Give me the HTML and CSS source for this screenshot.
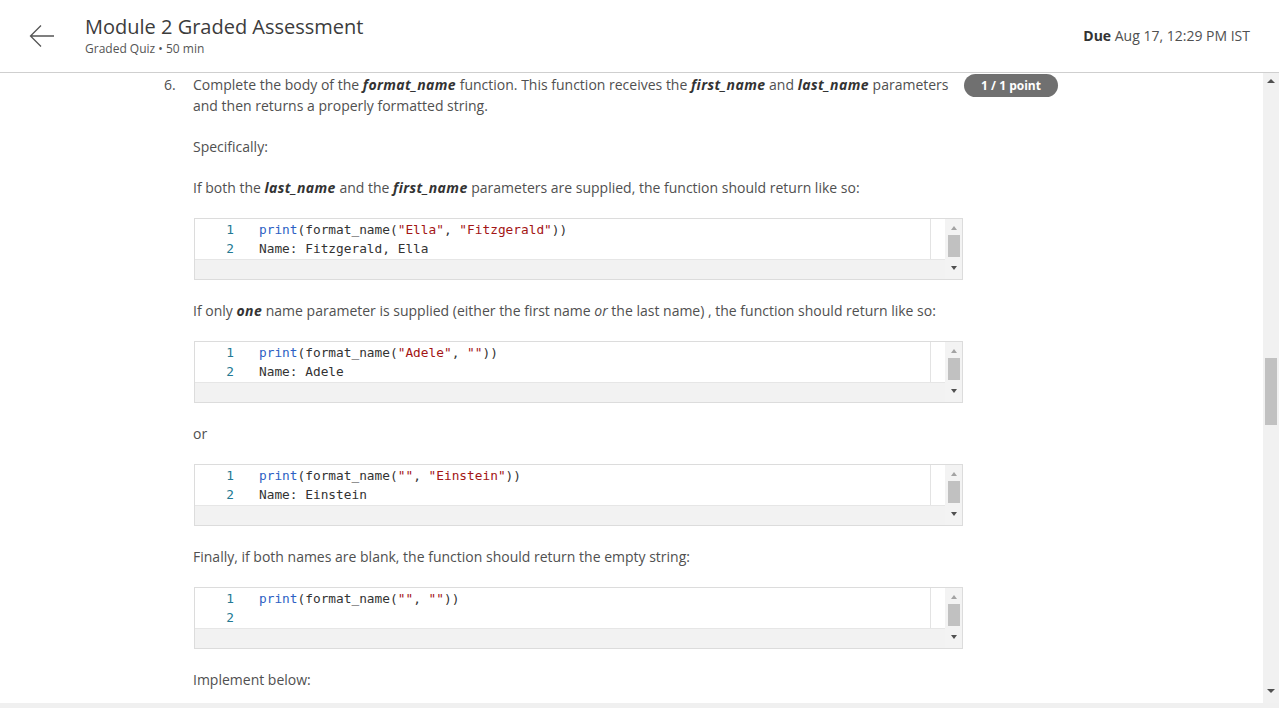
FILE: index.html
```html
<!DOCTYPE html>
<html>
<head>
<meta charset="utf-8">
<link rel="stylesheet" href="styles.css">
</head>
<body>
<header class="top">
  <div class="back">
    <svg width="26" height="24" viewBox="0 0 26 24"><path d="M25 12H2M12 1.5L1.5 12L12 22.5" fill="none" stroke="#555" stroke-width="1.3"/></svg>
  </div>
  <div class="titles">
    <h1 class="title">Module 2 Graded Assessment</h1>
    <div class="sub">Graded Quiz • 50 min</div>
  </div>
  <div class="due"><b>Due</b> Aug 17, 12:29 PM IST</div>
</header>
<div class="main">
  <div class="content">
    <div class="question">
      <div class="qnum">6.</div>
      <div class="qbody">
        <p>Complete the body of the <b><i>format_name</i></b> function. This function receives the <b><i>first_name</i></b> and <b><i>last_name</i></b> parameters and then returns a properly formatted string.</p>
        <p>Specifically:</p>
        <p>If both the <b><i>last_name</i></b> and the <b><i>first_name</i></b> parameters are supplied, the function should return like so:</p>
        <div class="code">
          <div class="editor">
            <div class="ln"><span class="num">1</span><span class="src"><span class="kw">print</span>(format_name(<span class="str">"Ella"</span>, <span class="str">"Fitzgerald"</span>))</span></div>
            <div class="ln"><span class="num">2</span><span class="src">Name: Fitzgerald, Ella</span></div>
          </div>
          <div class="gapcell"></div>
          <div class="band"></div>
          <div class="csb"><span class="cup"></span><span class="cthumb"></span><span class="cdown"></span></div>
        </div>
        <p>If only <b><i>one</i></b> name parameter is supplied (either the first name <i>or</i> the last name) , the function should return like so:</p>
        <div class="code">
          <div class="editor">
            <div class="ln"><span class="num">1</span><span class="src"><span class="kw">print</span>(format_name(<span class="str">"Adele"</span>, <span class="str">""</span>))</span></div>
            <div class="ln"><span class="num">2</span><span class="src">Name: Adele</span></div>
          </div>
          <div class="gapcell"></div>
          <div class="band"></div>
          <div class="csb"><span class="cup"></span><span class="cthumb"></span><span class="cdown"></span></div>
        </div>
        <p>or</p>
        <div class="code">
          <div class="editor">
            <div class="ln"><span class="num">1</span><span class="src"><span class="kw">print</span>(format_name(<span class="str">""</span>, <span class="str">"Einstein"</span>))</span></div>
            <div class="ln"><span class="num">2</span><span class="src">Name: Einstein</span></div>
          </div>
          <div class="gapcell"></div>
          <div class="band"></div>
          <div class="csb"><span class="cup"></span><span class="cthumb"></span><span class="cdown"></span></div>
        </div>
        <p>Finally, if both names are blank, the function should return the empty string:</p>
        <div class="code">
          <div class="editor">
            <div class="ln"><span class="num">1</span><span class="src"><span class="kw">print</span>(format_name(<span class="str">""</span>, <span class="str">""</span>))</span></div>
            <div class="ln"><span class="num">2</span><span class="src"></span></div>
          </div>
          <div class="gapcell"></div>
          <div class="band"></div>
          <div class="csb"><span class="cup"></span><span class="cthumb"></span><span class="cdown"></span></div>
        </div>
        <p>Implement below:</p>
      </div>
      <div class="badge">1 / 1 point</div>
    </div>
  </div>
  <div class="vscroll">
    <span class="up"></span>
    <div class="track"><div class="thumb"></div></div>
    <span class="down"></span>
  </div>
</div>
<div class="hband"></div>
</body>
</html>
```

FILE: styles.css
```css
html, body {
  margin: 0;
  padding: 0;
  width: 1279px;
  height: 708px;
  overflow: hidden;
  background: #fff;
  font-family: "Open Sans", "Liberation Sans", sans-serif;
  color: #505050;
}

.top {
  height: 72px;
  border-bottom: 1px solid #cfcfcf;
  display: flex;
  align-items: flex-start;
  box-sizing: content-box;
}

.back {
  width: 26px;
  height: 24px;
  margin: 24px 0 0 29px;
}
.back svg { display: block; }

.titles {
  margin: 13px 0 0 30px;
  flex: 1;
}

.title {
  margin: 0;
  font-size: 20px;
  line-height: 27px;
  font-weight: 400;
  color: #3c3c3c;
}

.sub {
  font-size: 12px;
  line-height: 16px;
  color: #555;
  margin-top: 1px;
}

.due {
  margin: 26px 29px 0 0;
  font-size: 14px;
  line-height: 20px;
  color: #505050;
}
.due b { color: #333; font-weight: 700; }

.main {
  height: 630px;
  display: flex;
}

.content {
  flex: 1;
  overflow: hidden;
}

.question {
  display: flex;
  align-items: flex-start;
  padding: 1px 0 0 164px;
}

.qnum {
  width: 29px;
  font-size: 14px;
  line-height: 21px;
}

.qbody {
  width: 770px;
  font-size: 14px;
  line-height: 21px;
}

.qbody p {
  margin: 0 0 20px 0;
}

.qbody b { color: #333; letter-spacing: 0.4px; }

.badge {
  margin-left: 1px;
  width: 94px;
  height: 23px;
  border-radius: 12px;
  background: #707070;
  color: #fff;
  font-size: 12px;
  font-weight: 700;
  line-height: 23px;
  text-align: center;
}

.code {
  margin: 0 0 20px 1px;
  width: 767px;
  height: 60px;
  border: 1px solid #dcdcdc;
  display: grid;
  grid-template-columns: 736px 14px 17px;
  grid-template-rows: 40px 20px;
  background: #fff;
}

.editor {
  grid-column: 1;
  grid-row: 1;
  border-right: 1px solid #e3e3e3;
  font-family: "DejaVu Sans Mono", "Liberation Mono", monospace;
  font-size: 12.8px;
  line-height: 19px;
  color: #333;
  padding-top: 1px;
}

.ln { display: flex; height: 19px; white-space: pre; }
.num {
  width: 39px;
  text-align: right;
  color: #237893;
}
.src { padding-left: 25px; }
.kw { color: #2d5fc4; }
.str { color: #a31515; }

.gapcell { grid-column: 2; grid-row: 1; }

.band {
  grid-column: 1 / 3;
  grid-row: 2;
  background: #f2f2f2;
  border-top: 1px solid #e6e6e6;
}

.csb {
  grid-column: 3;
  grid-row: 1 / 3;
  background: #f3f3f3;
  display: flex;
  flex-direction: column;
  align-items: center;
}

.cup {
  margin-top: 7px;
  width: 0; height: 0;
  border-left: 3.5px solid transparent;
  border-right: 3.5px solid transparent;
  border-bottom: 4px solid #a3a3a3;
}
.cthumb {
  margin-top: 5px;
  width: 12px;
  height: 22px;
  background: #c1c1c1;
}
.cdown {
  margin-top: 9px;
  width: 0; height: 0;
  border-left: 3.5px solid transparent;
  border-right: 3.5px solid transparent;
  border-top: 4px solid #505050;
}

.vscroll {
  width: 16px;
  background: #f1f1f1;
  display: flex;
  flex-direction: column;
  align-items: center;
}
.up {
  margin-top: 6px;
  width: 0; height: 0;
  border-left: 4px solid transparent;
  border-right: 4px solid transparent;
  border-bottom: 4px solid #505050;
}
.track {
  flex: 1;
  width: 100%;
  padding-top: 275px;
  box-sizing: border-box;
  display: flex;
  justify-content: center;
}
.thumb {
  width: 12px;
  height: 67px;
  background: #c1c1c1;
}
.down {
  margin-bottom: 10px;
  width: 0; height: 0;
  border-left: 4px solid transparent;
  border-right: 4px solid transparent;
  border-top: 4px solid #505050;
}

.hband {
  height: 5px;
  background: #f0f0f0;
}
```
